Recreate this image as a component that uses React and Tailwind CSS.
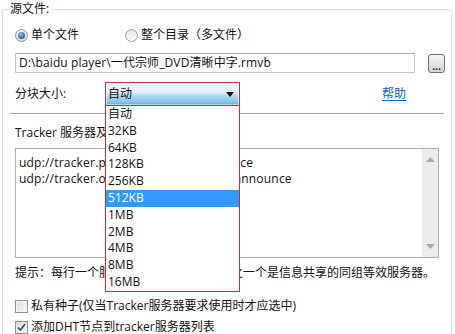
export default function App() {
  const sizes = ['自动', '32KB', '64KB', '128KB', '256KB', '512KB', '1MB', '2MB', '4MB', '8MB', '16MB'];
  return (
    <div className="w-[455px] h-[334px] overflow-hidden bg-white text-[12px] leading-[16px] text-[#111] font-['Open_Sans','Noto_Sans_CJK_SC',sans-serif]">
      <div className="relative ml-[2px] mt-[9px] w-[450px] h-[340px] rounded-[3px] border border-[#d5dfe5]">
        <div className="absolute -top-[9px] left-[5px] bg-white px-[2px] leading-[16px]">源文件:</div>
        <div className="pl-[12px]">
          {/* radio row */}
          <div className="mt-[17px] flex h-[16px] items-center">
            <div className="flex w-[110px] items-center">
              <span className="flex h-[13px] w-[13px] items-center justify-center rounded-full border border-[#8e9196] bg-[linear-gradient(to_bottom,#f2f2f2,#dcdcdc)]">
                <span className="h-[7px] w-[7px] rounded-full bg-[radial-gradient(circle_at_40%_35%,#8fc2ee,#2a5fa0_70%,#1b3f74)]" />
              </span>
              <span className="ml-[3px]">单个文件</span>
            </div>
            <div className="flex items-center">
              <span className="h-[13px] w-[13px] rounded-full border border-[#9a9da2] bg-[linear-gradient(to_bottom,#e6e6e6,#f9f9f9)]" />
              <span className="ml-[3px]">整个目录（多文件）</span>
            </div>
          </div>

          {/* path row */}
          <div className="mt-[10px] flex items-center">
            <div className="h-[20px] w-[400px] border border-[#c5c9cf] border-t-[#abadb3] px-[3px] leading-[18px] whitespace-nowrap tracking-[0.1px]">
              D:\baidu player\一代宗师_DVD清晰中字.rmvb
            </div>
            <div className="ml-[13px] flex h-[19px] w-[17px] items-end justify-center rounded-[3px] border border-[#707070] bg-[linear-gradient(to_bottom,#f6f6f6,#e4e4e4_50%,#d6d6d6)] pb-[1px] text-[10px] leading-[10px] font-bold text-[#222]">
              ...
            </div>
          </div>

          {/* chunk size row */}
          <div className="mt-[9px] flex h-[24px] items-center">
            <div className="w-[90px]">分块大小:</div>
            <div className="relative z-10 h-[24px] w-[135px]">
              <div className="flex h-[24px] items-center justify-between border border-[#b8333f] bg-[linear-gradient(to_bottom,#f1f8fd_0%,#dcf0fb_45%,#b3dcf3_55%,#7fbfe7_92%,#4f7fa6_100%)] pl-[2px] pr-[5px] shadow-[inset_0_0_0_1px_rgba(255,255,255,0.6)]">
                <span>自动</span>
                <svg width="8" height="5" viewBox="0 0 8 5"><path d="M0 0h8L4 5z" fill="#111" /></svg>
              </div>
              <div className="absolute left-0 top-[24px] w-[135px] border-x border-b border-[#c0303c] bg-white">
                {sizes.map((s) => (
                  <div
                    key={s}
                    className={
                      s === '512KB'
                        ? 'h-[16.8px] bg-[#3399ff] pl-[2px] leading-[16.8px] text-white'
                        : 'h-[16.8px] pl-[2px] leading-[16.8px]'
                    }
                  >
                    {s}
                  </div>
                ))}
              </div>
            </div>
            <div className="ml-[142px] text-[#0a5fc4] underline underline-offset-2">帮助</div>
          </div>

          {/* separator */}
          <div className="-ml-[5px] mt-[7px] h-px w-[434px] bg-[#a5a5a5]" />

          {/* tracker label */}
          <div className="mt-[11px] h-[16px] whitespace-nowrap">Tracker 服务器及DHT节点列表:</div>

          {/* textarea */}
          <div className="mt-[7px] flex h-[110px] w-[424px] border border-[#abadb3]">
            <div className="flex-1 whitespace-nowrap pl-[3px] pt-[6px] tracking-[0.2px]">
              <div>udp://tracker.publicbt.com:80/announce</div>
              <div>udp://tracker.openbittorrent.com:80/announce</div>
            </div>
            <div className="flex w-[16px] flex-col items-center justify-between bg-[#ececec] py-[8px]">
              <svg width="9" height="5" viewBox="0 0 9 5"><path d="M0 5L4.5 0L9 5z" fill="#a8a8a8" /></svg>
              <svg width="9" height="5" viewBox="0 0 9 5"><path d="M0 0L4.5 5L9 0z" fill="#a8a8a8" /></svg>
            </div>
          </div>

          {/* hint */}
          <div className="mt-[7px] h-[16px] whitespace-nowrap">提示：每行一个服务器，空行分开的每组之一个是信息共享的同组等效服务器。</div>

          {/* checkbox 1 */}
          <div className="mt-[17px] flex h-[16px] items-center">
            <span className="h-[13px] w-[13px] border border-[#8f8f8f] bg-[linear-gradient(135deg,#dcdcdc,#f8f8f8)] shadow-[inset_0_0_0_1px_#f4f4f4]" />
            <span className="ml-[3px] whitespace-nowrap">私有种子(仅当Tracker服务器要求使用时才应选中)</span>
          </div>

          {/* checkbox 2 */}
          <div className="mt-[5px] flex h-[16px] items-center">
            <span className="relative flex h-[13px] w-[13px] items-center justify-center border border-[#8f8f8f] bg-[linear-gradient(135deg,#dcdcdc,#f8f8f8)]">
              <svg width="9" height="9" viewBox="0 0 9 9"><path d="M1 4.5L3.5 7L8 1" stroke="#3a4a6a" strokeWidth="1.6" fill="none" /></svg>
            </span>
            <span className="ml-[3px] whitespace-nowrap">添加DHT节点到tracker服务器列表</span>
          </div>
        </div>
      </div>
    </div>
  );
}
